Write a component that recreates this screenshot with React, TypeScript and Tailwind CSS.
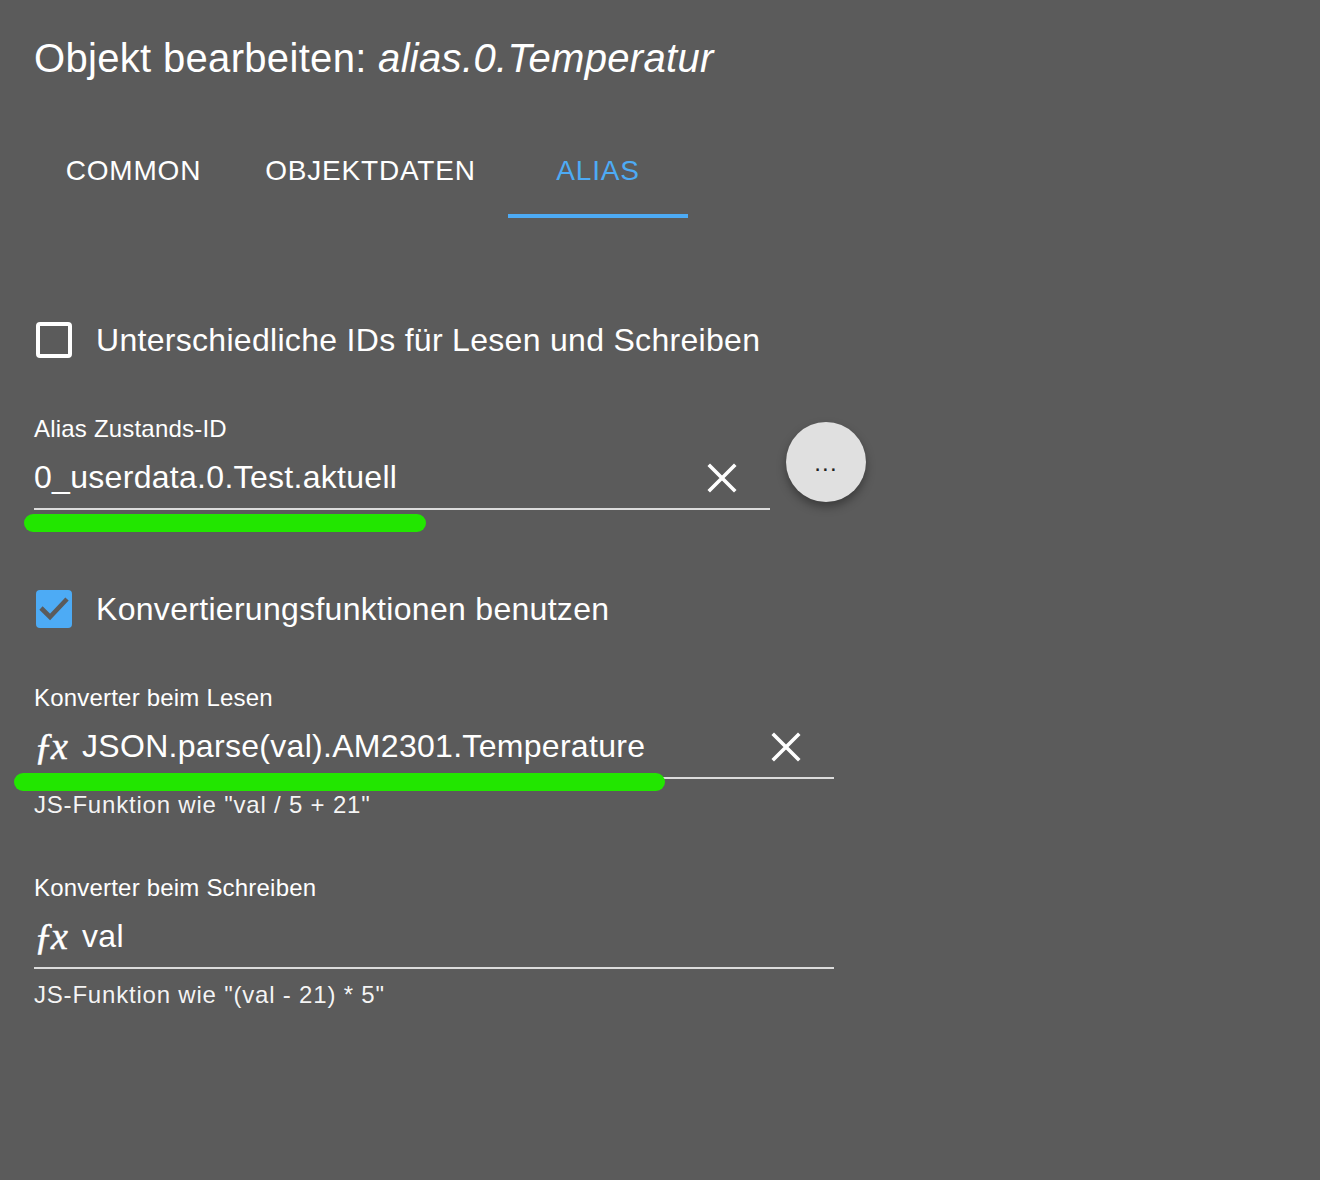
import React from "react";

const X = ({ className = "" }: { className?: string }) => (
  <svg viewBox="0 0 30 30" className={"w-[30px] h-[30px] translate-y-[1px] " + className} fill="none" stroke="white" strokeWidth="3.6" strokeLinecap="square">
    <path d="M3 3 L27 27 M27 3 L3 27" />
  </svg>
);

const Fx = () => (
  <span className="w-[48px] shrink-0 text-white text-[38px] leading-none italic font-['Liberation_Serif',serif] tracking-[-2px] [-webkit-text-stroke:0.5px_white]">ƒx</span>
);

const Field = ({
  label,
  value,
  helper,
  fx,
  clear,
  width,
}: {
  label: string;
  value: string;
  helper?: string;
  fx?: boolean;
  clear?: boolean;
  width: string;
}) => (
  <div className={width}>
    <div className="text-[24px] leading-[28px] tracking-[0.2px] text-white">{label}</div>
    <div className="mt-[11px] h-[56px] flex items-center border-b-2 border-[#dcdcdc] pb-[9px]">
      {fx && <Fx />}
      <span className="flex-1 text-[32px] leading-[40px] tracking-[0.3px] text-white">{value}</span>
      {clear && <X className="mr-[33px]" />}
    </div>
    {helper && <div className="mt-[12px] text-[24px] leading-[28px] tracking-[0.8px] text-white/95">{helper}</div>}
  </div>
);

export default function App() {
  return (
    <div className="w-[1320px] h-[1180px] bg-[#5b5b5b] text-white font-['Liberation_Sans',Arial,sans-serif] overflow-hidden relative pl-[34px] pt-[34px]">
      <h1 className="text-[40px] leading-[48px] font-normal tracking-[0.32px]">
        Objekt bearbeiten: <i>alias.0.Temperatur</i>
      </h1>

      <div className="mt-[42px] flex h-[94px] text-[28px] tracking-[0.8px]">
        <div className="w-[199px] flex items-center justify-center pt-[4px] border-b-4 border-transparent">COMMON</div>
        <div className="w-[275px] flex items-center justify-center pt-[4px] border-b-4 border-transparent">OBJEKTDATEN</div>
        <div className="w-[180px] flex items-center justify-center pt-[4px] text-[#4dabf5] border-b-4 border-[#4dabf5]">ALIAS</div>
      </div>

      <div className="mt-[102px] flex items-center h-[40px] gap-[24px]">
        <div className="ml-[2px] w-[36px] h-[36px] rounded-[4px] border-[4px] border-white" />
        <span className="text-[32px] leading-[40px] tracking-[0.3px]">Unterschiedliche IDs für Lesen und Schreiben</span>
      </div>

      <div className="mt-[55px] flex items-start">
        <Field label="Alias Zustands-ID" value="0_userdata.0.Test.aktuell" clear width="w-[736px]" />
        <button className="ml-[16px] mt-[7px] w-[80px] h-[80px] rounded-full bg-[#e0e0e0] text-[#222] text-[24px] tracking-[1.2px] leading-none flex items-center justify-center pt-[2px] shadow-[0_5px_10px_rgba(0,0,0,0.35)]">
          ...
        </button>
      </div>

      <div className="mt-[79px] flex items-center h-[40px] gap-[24px]">
        <div className="ml-[2px] w-[36px] h-[38px] rounded-[4px] bg-[#4dabf5] flex items-center justify-center">
          <svg viewBox="0 0 36 38" className="w-[36px] h-[38px]" fill="none" stroke="#5b5b5b" strokeWidth="4.6">
            <path d="M5 18 L14 27 L31 9" />
          </svg>
        </div>
        <span className="text-[32px] leading-[40px] tracking-[0.3px]">Konvertierungsfunktionen benutzen</span>
      </div>

      <div className="mt-[55px]">
        <Field label="Konverter beim Lesen" value="JSON.parse(val).AM2301.Temperature" helper={'JS-Funktion wie "val / 5 + 21"'} fx clear width="w-[800px]" />
      </div>

      <div className="mt-[55px]">
        <Field label="Konverter beim Schreiben" value="val" helper={'JS-Funktion wie "(val - 21) * 5"'} fx width="w-[800px]" />
      </div>

      <div className="absolute left-[24px] top-[514px] w-[402px] h-[18px] rounded-[9px] bg-[#22e600]" />
      <div className="absolute left-[14px] top-[773px] w-[651px] h-[18px] rounded-[9px] bg-[#22e600]" />
    </div>
  );
}
